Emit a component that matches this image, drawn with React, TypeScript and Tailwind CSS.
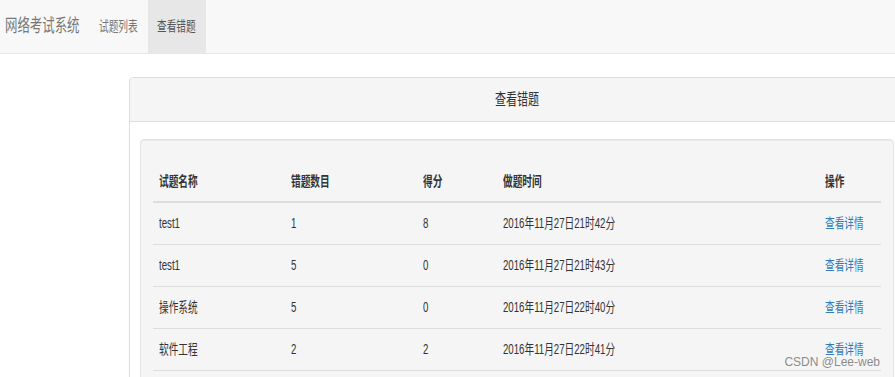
import React from 'react';

type Row = { name: string; wrong: string; score: string; time: string };

const rows: Row[] = [
  { name: 'test1', wrong: '1', score: '8', time: '2016年11月27日21时42分' },
  { name: 'test1', wrong: '5', score: '0', time: '2016年11月27日21时43分' },
  { name: '操作系统', wrong: '5', score: '0', time: '2016年11月27日22时40分' },
  { name: '软件工程', wrong: '2', score: '2', time: '2016年11月27日22时41分' },
];

// the screenshot is squeezed sideways, so text gets a horizontal scale
const Narrow: React.FC<{ children: React.ReactNode; className?: string }> = ({ children, className = '' }) => (
  <span className={'inline-block origin-left scale-x-[0.69] whitespace-nowrap ' + className}>{children}</span>
);

const Navbar: React.FC = () => (
  <nav className="flex h-[54px] bg-[#f8f8f8] border-b border-[#e7e7e7]">
    <a className="flex items-center w-[89px] pl-[5px] text-[18px] text-[#777]">
      <Narrow>网络考试系统</Narrow>
    </a>
    <a className="flex items-center w-[59px] pl-[10px] text-[14px] text-[#777]">
      <Narrow>试题列表</Narrow>
    </a>
    <a className="flex items-center w-[58px] pl-[9px] text-[14px] text-[#555] bg-[#e7e7e7]">
      <Narrow>查看错题</Narrow>
    </a>
  </nav>
);

const cols = 'grid grid-cols-[132px_132px_80px_322px_62px] items-center';

const WrongTable: React.FC = () => (
  <div className="w-[728px] text-[14px] text-[#333]">
    <div className={cols + ' h-[42px] border-b-2 border-[#ddd] font-bold'}>
      <div className="pl-[6px]"><Narrow>试题名称</Narrow></div>
      <div className="pl-[6px]"><Narrow>错题数目</Narrow></div>
      <div className="pl-[6px]"><Narrow>得分</Narrow></div>
      <div className="pl-[6px]"><Narrow>做题时间</Narrow></div>
      <div className="pl-[6px]"><Narrow>操作</Narrow></div>
    </div>
    {rows.map((r, i) => (
      <div key={i} className={cols + ' h-[42px] border-b border-[#ddd]'}>
        <div className="pl-[6px]"><Narrow>{r.name}</Narrow></div>
        <div className="pl-[6px]"><Narrow>{r.wrong}</Narrow></div>
        <div className="pl-[6px]"><Narrow>{r.score}</Narrow></div>
        <div className="pl-[6px]"><Narrow>{r.time}</Narrow></div>
        <div className="pl-[6px]">
          <a className="text-[#337ab7]"><Narrow>查看详情</Narrow></a>
        </div>
      </div>
    ))}
  </div>
);

const App: React.FC = () => {
  return (
    <div
      className="relative w-[895px] h-[377px] overflow-hidden bg-white"
      style={{ fontFamily: '"Liberation Sans", "Noto Sans CJK SC", sans-serif' }}
    >
      <Navbar />
      <div className="ml-[129px] mt-[23px] w-[776px] shrink-0 border border-[#ddd] rounded-[4px] bg-white">
        <div className="h-[44px] flex items-center justify-center bg-[#f5f5f5] border-b border-[#ddd] rounded-t-[4px] text-[16px] text-[#333]">
          <span className="inline-block scale-x-[0.69] whitespace-nowrap">查看错题</span>
        </div>
        <div className="pt-[17px] pl-[10px] pr-[10px]">
          <div className="w-[754px] bg-[#f5f5f5] border border-[#e3e3e3] rounded-[4px] pt-[21px] pl-[12px] pr-[11px] pb-[19px] shadow-[inset_0_1px_1px_rgba(0,0,0,0.05)]">
            <WrongTable />
          </div>
        </div>
      </div>
      <div className="absolute right-[15px] bottom-[7px] text-[12px] leading-[16px] text-[#8a8a8a] [text-shadow:0_0_2px_#fff]">
        CSDN @Lee-web
      </div>
    </div>
  );
};

export default App;
